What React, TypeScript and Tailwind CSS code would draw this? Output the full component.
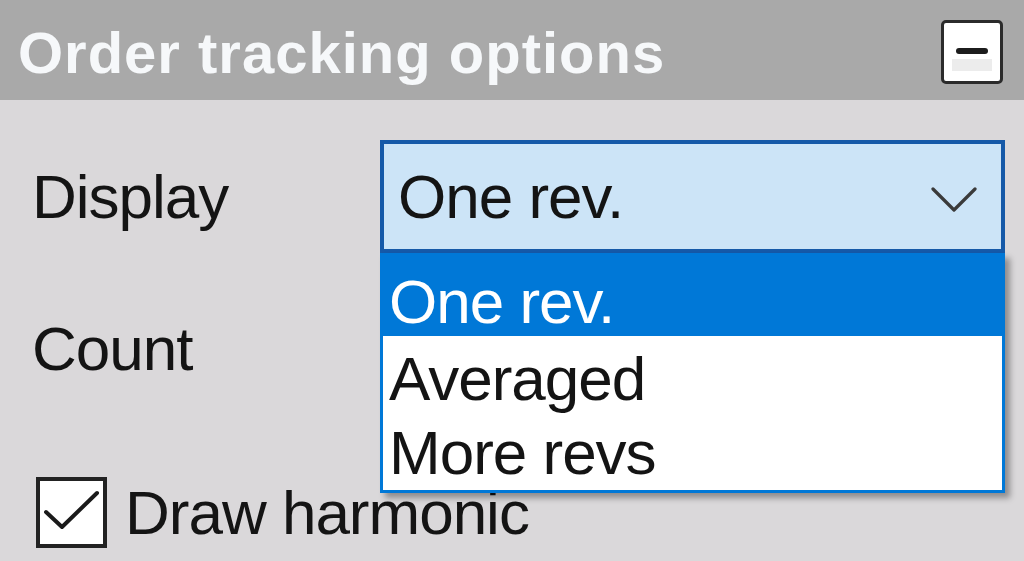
const options = ["One rev.", "Averaged", "More revs"];

export default function App() {
  return (
    <div className="relative w-[1024px] h-[561px] overflow-hidden bg-[#dad8da] font-['Liberation_Sans',Arial,sans-serif] text-[#141414]">
      {/* title bar */}
      <div className="flex h-[100px] items-center justify-between bg-[#a9a9a9] pl-[18px] pr-[21px]">
        <span className="mt-[6px] text-[58px] font-bold leading-none tracking-[1px] text-[#f6f8fa]">
          Order tracking options
        </span>
        <button className="relative mt-[4px] flex h-[64px] w-[62px] items-center justify-center overflow-hidden rounded-[5px] border-[3px] border-[#2b2b2b] bg-white">
          <span className="absolute inset-x-[8px] bottom-[10px] h-[12px] bg-[#ececec]" />
          <span className="relative mb-[2px] h-[6px] w-[32px] rounded-full bg-[#1c1c1c]" />
        </button>
      </div>

      {/* form */}
      <div className="flex flex-col pt-[40px]">
        <div className="flex items-center">
          <span className="w-[380px] pl-[32px] text-[62px] leading-none tracking-[-1px]">Display</span>
          <div className="flex h-[113px] w-[625px] items-center justify-between border-[4px] border-[#1559a8] bg-[#cce4f7] pl-[14px] pr-[24px]">
            <span className="text-[62px] leading-none tracking-[-1px]">One rev.</span>
            <svg width="46" height="28" viewBox="0 0 46 28" fill="none" className="mt-[6px]">
              <path d="M2 3 L23 24 L44 3" stroke="#3a3a3a" strokeWidth="3.2" strokeLinecap="round" strokeLinejoin="round" />
            </svg>
          </div>
        </div>

        <div className="mt-[56px] flex h-[80px] items-center">
          <span className="pl-[32px] text-[62px] leading-none tracking-[-1px]">Count</span>
        </div>

        <div className="mt-[88px] flex items-center gap-[18px] pl-[36px]">
          <div className="h-[71px] w-[71px] border-[4px] border-[#222] bg-white">
            <svg width="63" height="63" viewBox="0 0 63 63" fill="none">
              <path d="M6 31 L22 46 L57 12" stroke="#1a1a1a" strokeWidth="4" strokeLinecap="round" strokeLinejoin="round" />
            </svg>
          </div>
          <span className="text-[62px] leading-none tracking-[-1px]">Draw harmonic</span>
        </div>
      </div>

      {/* open dropdown list */}
      <div className="absolute left-[380px] top-[253px] w-[625px] border-[3px] border-[#0078d7] bg-white shadow-[5px_5px_6px_rgba(0,0,0,0.35)]">
        {options.map((o, i) => (
          <div
            key={o}
            className={
              i === 0
                ? "flex h-[80px] items-center bg-[#0078d7] pl-[6px] pt-[12px] text-[62px] leading-none tracking-[-1px] text-white"
                : i === 1
                  ? "mt-[6px] flex h-[74px] items-center pl-[6px] text-[62px] leading-none tracking-[-1px]"
                  : "flex h-[74px] items-center pl-[6px] text-[62px] leading-none tracking-[-1px]"
            }
          >
            {o}
          </div>
        ))}
      </div>
    </div>
  );
}
